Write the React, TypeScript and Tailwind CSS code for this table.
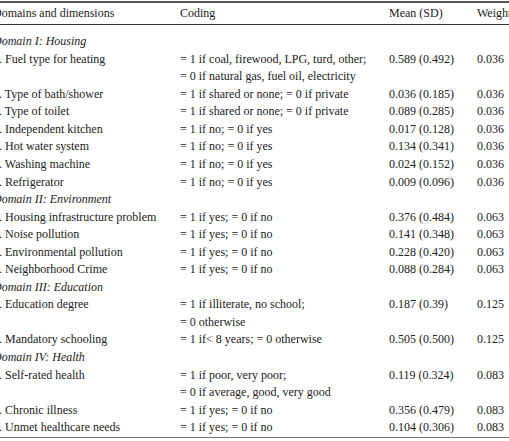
import React from "react";

type Row =
  | { kind: "domain"; label: string }
  | { kind: "row"; label: string; coding: string; mean?: string; weight?: string };

const rows: Row[] = [
  { kind: "domain", label: "Domain I: Housing" },
  { kind: "row", label: "1. Fuel type for heating", coding: "= 1 if coal, firewood, LPG, turd, other;", mean: "0.589 (0.492)", weight: "0.036" },
  { kind: "row", label: "", coding: "= 0 if natural gas, fuel oil, electricity" },
  { kind: "row", label: "2. Type of bath/shower", coding: "= 1 if shared or none; = 0 if private", mean: "0.036 (0.185)", weight: "0.036" },
  { kind: "row", label: "3. Type of toilet", coding: "= 1 if shared or none; = 0 if private", mean: "0.089 (0.285)", weight: "0.036" },
  { kind: "row", label: "4. Independent kitchen", coding: "= 1 if no; = 0 if yes", mean: "0.017 (0.128)", weight: "0.036" },
  { kind: "row", label: "5. Hot water system", coding: "= 1 if no; = 0 if yes", mean: "0.134 (0.341)", weight: "0.036" },
  { kind: "row", label: "6. Washing machine", coding: "= 1 if no; = 0 if yes", mean: "0.024 (0.152)", weight: "0.036" },
  { kind: "row", label: "7. Refrigerator", coding: "= 1 if no; = 0 if yes", mean: "0.009 (0.096)", weight: "0.036" },
  { kind: "domain", label: "Domain II: Environment" },
  { kind: "row", label: "1. Housing infrastructure problem", coding: "= 1 if yes; = 0 if no", mean: "0.376 (0.484)", weight: "0.063" },
  { kind: "row", label: "2. Noise pollution", coding: "= 1 if yes; = 0 if no", mean: "0.141 (0.348)", weight: "0.063" },
  { kind: "row", label: "3. Environmental pollution", coding: "= 1 if yes; = 0 if no", mean: "0.228 (0.420)", weight: "0.063" },
  { kind: "row", label: "4. Neighborhood Crime", coding: "= 1 if yes; = 0 if no", mean: "0.088 (0.284)", weight: "0.063" },
  { kind: "domain", label: "Domain III: Education" },
  { kind: "row", label: "1. Education degree", coding: "= 1 if illiterate, no school;", mean: "0.187 (0.39)", weight: "0.125" },
  { kind: "row", label: "", coding: "= 0 otherwise" },
  { kind: "row", label: "2. Mandatory schooling", coding: "= 1 if< 8 years; = 0 otherwise", mean: "0.505 (0.500)", weight: "0.125" },
  { kind: "domain", label: "Domain IV: Health" },
  { kind: "row", label: "1. Self-rated health", coding: "= 1 if poor, very poor;", mean: "0.119 (0.324)", weight: "0.083" },
  { kind: "row", label: "", coding: "= 0 if average, good, very good" },
  { kind: "row", label: "2. Chronic illness", coding: "= 1 if yes; = 0 if no", mean: "0.356 (0.479)", weight: "0.083" },
  { kind: "row", label: "3. Unmet healthcare needs", coding: "= 1 if yes; = 0 if no", mean: "0.104 (0.306)", weight: "0.083" },
];

const grid = "grid grid-cols-[187px_209px_88px_60px] ml-[-7px] whitespace-nowrap";

export default function App() {
  return (
    <div
      className="w-[509px] h-[441px] overflow-hidden bg-white text-[#222] text-[12px]"
      style={{ fontFamily: '"Liberation Serif", "Times New Roman", serif' }}
    >
      <div className="pt-[1px]">
        <div className="h-[1.5px] bg-[#555]" />
        <div className={`${grid} h-[21.5px] items-center`}>
          <div>Domains and dimensions</div>
          <div>Coding</div>
          <div>Mean (SD)</div>
          <div>Weight</div>
        </div>
        <div className="h-[1.2px] bg-[#333]" />
        <div className="pt-[8px]">
          {rows.map((r, i) =>
            r.kind === "domain" ? (
              <div key={i} className="ml-[-7px] h-[17.55px] leading-[17.55px] italic whitespace-nowrap">
                {r.label}
              </div>
            ) : (
              <div key={i} className={`${grid} h-[17.55px] leading-[17.55px]`}>
                <div>{r.label}</div>
                <div>{r.coding}</div>
                <div>{r.mean ?? ""}</div>
                <div>{r.weight ?? ""}</div>
              </div>
            )
          )}
        </div>
        <div className="h-[1.5px] bg-[#777]" />
      </div>
    </div>
  );
}
